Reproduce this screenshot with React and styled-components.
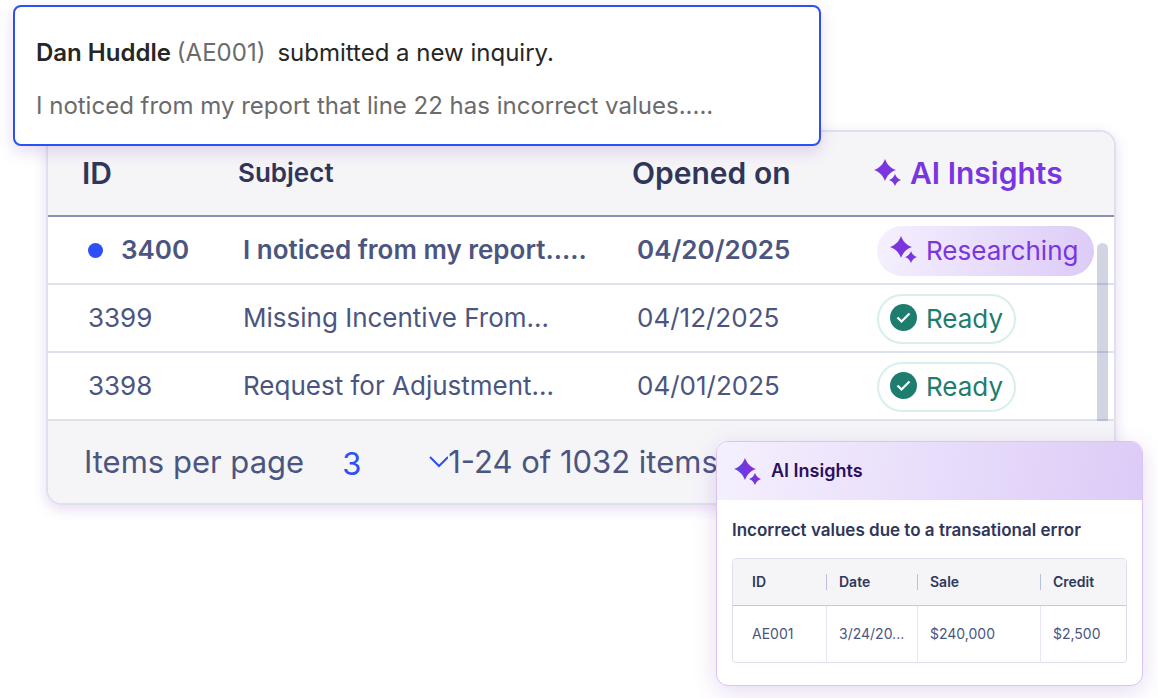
import React from "react";
import styled, { createGlobalStyle } from "styled-components";

const GlobalStyle = createGlobalStyle`
  *, *::before, *::after { box-sizing: border-box; }
  body {
    margin: 0;
    background: #ffffff;
    font-family: Inter, "Liberation Sans", sans-serif;
    color: #4c5580;
  }
`;

const Page = styled.main`
  display: flex;
  flex-direction: column;
  padding: 5px 15px 12px 13px;
`;

const Notice = styled.section`
  z-index: 1;
  width: 808px;
  max-width: 100%;
  padding: 30px 21px 22px;
  border: 2px solid #2c50f5;
  border-radius: 8px;
  background: #ffffff;
  box-shadow: 0 6px 16px rgba(120, 50, 180, 0.18);
  font-size: 24px;
  line-height: 32px;
  color: #262626;
`;

const NoticeTitle = styled.p`
  display: flex;
  gap: 6px;
  margin: 0 0 21px;
`;

const Sender = styled.strong`
  font-weight: 600;
`;

const NoticeText = styled.p`
  margin: 0;
  color: #6b6b6b;
`;

const Code = styled.span`
  margin-right: 6px;
  color: #6b6b6b;
`;

const Panel = styled.section`
  position: relative;
  margin: -16px 27px 0 33px;
  border: 2px solid #dde1ef;
  border-radius: 16px;
  background: #ffffff;
  box-shadow: 0 4px 14px rgba(120, 50, 180, 0.18);
`;

const InquiryTable = styled.table`
  width: 100%;
  table-layout: fixed;
  border-collapse: separate;
  border-spacing: 0;
  text-align: left;
`;

const Column = styled.col`
  width: ${(p) => p.$width}px;
`;

const HeadCell = styled.th`
  height: 85px;
  padding: 0 0 2px ${(p) => p.$inset}px;
  border-bottom: 2px solid #8890b8;
  background: #f5f5f8;
  font-size: ${(p) => (p.$small ? 26 : 30)}px;
  font-weight: 600;
  line-height: 36px;
  color: ${(p) => (p.$accent ? "#7a35e0" : "#30365a")};
  white-space: nowrap;

  &:first-child { border-top-left-radius: 14px; }
  &:last-child { border-top-right-radius: 14px; }
`;

const IconLabel = styled.span`
  display: flex;
  align-items: center;
  gap: 9px;
`;

const Cell = styled.td`
  height: 68px;
  padding: ${(p) => (p.$status ? 2 : 0)}px 0 0 ${(p) => p.$inset}px;
  border-bottom: 2px solid #dde1ef;
  font-size: 26px;
  font-weight: ${(p) => (p.$unread ? 600 : 400)};
  line-height: 32px;
  white-space: nowrap;
`;

const IdLabel = styled.span`
  display: flex;
  align-items: center;
  gap: 18px;
`;

const UnreadDot = styled.span`
  width: 15px;
  height: 15px;
  border-radius: 50%;
  background: #2c50f5;
`;

const Pill = styled.span`
  display: inline-flex;
  align-items: center;
  gap: 9px;
  height: 50px;
  padding: 0 ${(p) => (p.$ready ? 11 : 16)}px 0 ${(p) => (p.$ready ? 11 : 13)}px;
  border: ${(p) => (p.$ready ? "2px solid #d8efeb" : "0")};
  border-radius: 25px;
  background: ${(p) => (p.$ready ? "#ffffff" : "linear-gradient(100deg, #f5f0fe, #dccbf7)")};
  vertical-align: middle;
  color: ${(p) => (p.$ready ? "#1f7d6e" : "#7a35e0")};

  svg { margin-bottom: 4px; }
`;

const ScrollThumb = styled.div`
  position: absolute;
  top: 111px;
  right: 6px;
  width: 11px;
  height: 178px;
  border-radius: 6px 6px 0 0;
  background: rgba(76, 85, 140, 0.25);
`;

const Footer = styled.footer`
  display: flex;
  align-items: center;
  height: 82px;
  padding-left: 36px;
  border-radius: 0 0 14px 14px;
  background: #f5f5f8;
  font-size: 31px;
  line-height: 36px;
  white-space: nowrap;
`;

const SelectBox = styled.span`
  display: flex;
  align-items: center;
  width: 106px;
  margin-left: 38px;
  color: #2c50f5;

  svg { flex: none; margin-left: -20px; pointer-events: none; }
`;

const PageSize = styled.select`
  width: 106px;
  padding: 4px 0 0;
  border: 0;
  appearance: none;
  background: transparent;
  font: inherit;
  color: inherit;
`;

const InsightCard = styled.aside`
  z-index: 2;
  align-self: flex-end;
  width: 427px;
  max-width: 100%;
  margin-top: -64px;
  border: 1px solid #d9c4f8;
  border-radius: 12px;
  background: #ffffff;
  box-shadow: 0 6px 24px rgba(120, 50, 180, 0.18);
  overflow: hidden;
`;

const InsightHeader = styled.h2`
  display: flex;
  align-items: center;
  gap: 10px;
  height: 58px;
  margin: 0;
  padding: 0 17px;
  background: linear-gradient(100deg, #f5f0fe, #dccbf7);
  font-size: 18px;
  font-weight: 600;
  line-height: 24px;
  color: #2c0f5e;
`;

const InsightBody = styled.div`
  padding: 18px 15px 22px;
`;

const InsightTitle = styled.h3`
  margin: 0 0 16px;
  font-size: 17px;
  font-weight: 600;
  line-height: 24px;
  color: #30365a;
`;

const DetailTable = styled.table`
  width: 100%;
  table-layout: fixed;
  border: 1px solid #dde1ef;
  border-radius: 4px;
  border-collapse: separate;
  border-spacing: 0;
  overflow: hidden;
  text-align: left;
  font-size: 14px;
  line-height: 20px;
`;

const DetailHead = styled.th`
  height: 47px;
  padding: 0 0 0 ${(p) => p.$inset}px;
  border-bottom: 1px solid #c5c9e0;
  background:
    ${(p) => (p.$divided ? "linear-gradient(#b9bfdd, #b9bfdd) right center / 1px 16px no-repeat," : "")}
    #f5f5f8;
  font-weight: 600;
  color: #30365a;
`;

const DetailCell = styled.td`
  height: 56px;
  padding: 0 0 0 ${(p) => p.$inset}px;
  border-right: ${(p) => (p.$divided ? "1px solid #e6e8f3" : "0")};
`;

function Sparkles({ gradient }) {
  return (
    <svg width="27" height="27" viewBox="0 0 27 27" fill={gradient ? "url(#sparkle)" : "currentColor"} aria-hidden="true">
      {gradient && (
        <defs>
          <linearGradient id="sparkle" x1="0" y1="0.6" x2="1" y2="0.4">
            <stop offset="0" stopColor="#4b49ee" />
            <stop offset="1" stopColor="#9a25cf" />
          </linearGradient>
        </defs>
      )}
      <path d="M11 0C13.2 5.8 16.2 8.8 22 11C16.2 13.2 13.2 16.2 11 22C8.8 16.2 5.8 13.2 0 11C5.8 8.8 8.8 5.8 11 0Z" />
      <path d="M21 15C22.2 18.2 23.8 19.8 27 21C23.8 22.2 22.2 23.8 21 27C19.8 23.8 18.2 22.2 15 21C18.2 19.8 19.8 18.2 21 15Z" />
    </svg>
  );
}

function CheckBadge() {
  return (
    <svg width="27" height="27" viewBox="0 0 27 27" aria-hidden="true">
      <circle cx="13.5" cy="13.5" r="13.5" fill="currentColor" />
      <path d="M7.5 13.5L11.5 17.5L19.5 9.5" fill="none" stroke="#ffffff" strokeWidth="2.2" />
    </svg>
  );
}

const inquiries = [
  { id: "3400", subject: "I noticed from my report.....", opened: "04/20/2025", unread: true },
  { id: "3399", subject: "Missing Incentive From...", opened: "04/12/2025" },
  { id: "3398", subject: "Request for Adjustment...", opened: "04/01/2025" },
];

export default function App() {
  return (
    <>
      <GlobalStyle />
      <Page>
        <Notice>
          <NoticeTitle>
            <Sender>Dan Huddle</Sender>
            <Code>(AE001)</Code>
            <span>submitted a new inquiry.</span>
          </NoticeTitle>
          <NoticeText>I noticed from my report that line 22 has incorrect values.....</NoticeText>
        </Notice>

        <Panel>
          <InquiryTable>
            <colgroup>
              <Column $width={172} />
              <col />
              <Column $width={240} />
              <Column $width={260} />
            </colgroup>
            <thead>
              <tr>
                <HeadCell $inset={34}>ID</HeadCell>
                <HeadCell $inset={18} $small>Subject</HeadCell>
                <HeadCell $inset={18}>Opened on</HeadCell>
                <HeadCell $inset={20} $accent>
                  <IconLabel><Sparkles />AI Insights</IconLabel>
                </HeadCell>
              </tr>
            </thead>
            <tbody>
              {inquiries.map((q) => (
                <tr key={q.id}>
                  <Cell $inset={40} $unread={q.unread}>
                    <IdLabel>{q.unread && <UnreadDot />}{q.id}</IdLabel>
                  </Cell>
                  <Cell $inset={23} $unread={q.unread}>{q.subject}</Cell>
                  <Cell $inset={23} $unread={q.unread}>{q.opened}</Cell>
                  <Cell $inset={23} $status>
                    {q.unread ? (
                      <Pill><Sparkles />Researching</Pill>
                    ) : (
                      <Pill $ready><CheckBadge />Ready</Pill>
                    )}
                  </Cell>
                </tr>
              ))}
            </tbody>
          </InquiryTable>
          <ScrollThumb />
          <Footer>
            <label htmlFor="page-size">Items per page</label>
            <SelectBox>
              <PageSize id="page-size" defaultValue="3">
                <option>3</option>
                <option>10</option>
                <option>24</option>
              </PageSize>
              <svg width="20" height="12" viewBox="0 0 20 12" fill="none" stroke="currentColor" strokeWidth="2" aria-hidden="true">
                <path d="M2 1L11 10L20 1" />
              </svg>
            </SelectBox>
            <span>1-24 of 1032 items</span>
          </Footer>
        </Panel>

        <InsightCard>
          <InsightHeader><Sparkles gradient />AI Insights</InsightHeader>
          <InsightBody>
            <InsightTitle>Incorrect values due to a transational error</InsightTitle>
            <DetailTable>
              <colgroup>
                <Column $width={94} />
                <Column $width={91} />
                <Column $width={123} />
                <col />
              </colgroup>
              <thead>
                <tr>
                  <DetailHead $inset={19} $divided>ID</DetailHead>
                  <DetailHead $inset={12} $divided>Date</DetailHead>
                  <DetailHead $inset={12} $divided>Sale</DetailHead>
                  <DetailHead $inset={12}>Credit</DetailHead>
                </tr>
              </thead>
              <tbody>
                <tr>
                  <DetailCell $inset={19} $divided>AE001</DetailCell>
                  <DetailCell $inset={12} $divided>3/24/20...</DetailCell>
                  <DetailCell $inset={12} $divided>$240,000</DetailCell>
                  <DetailCell $inset={12}>$2,500</DetailCell>
                </tr>
              </tbody>
            </DetailTable>
          </InsightBody>
        </InsightCard>
      </Page>
    </>
  );
}
